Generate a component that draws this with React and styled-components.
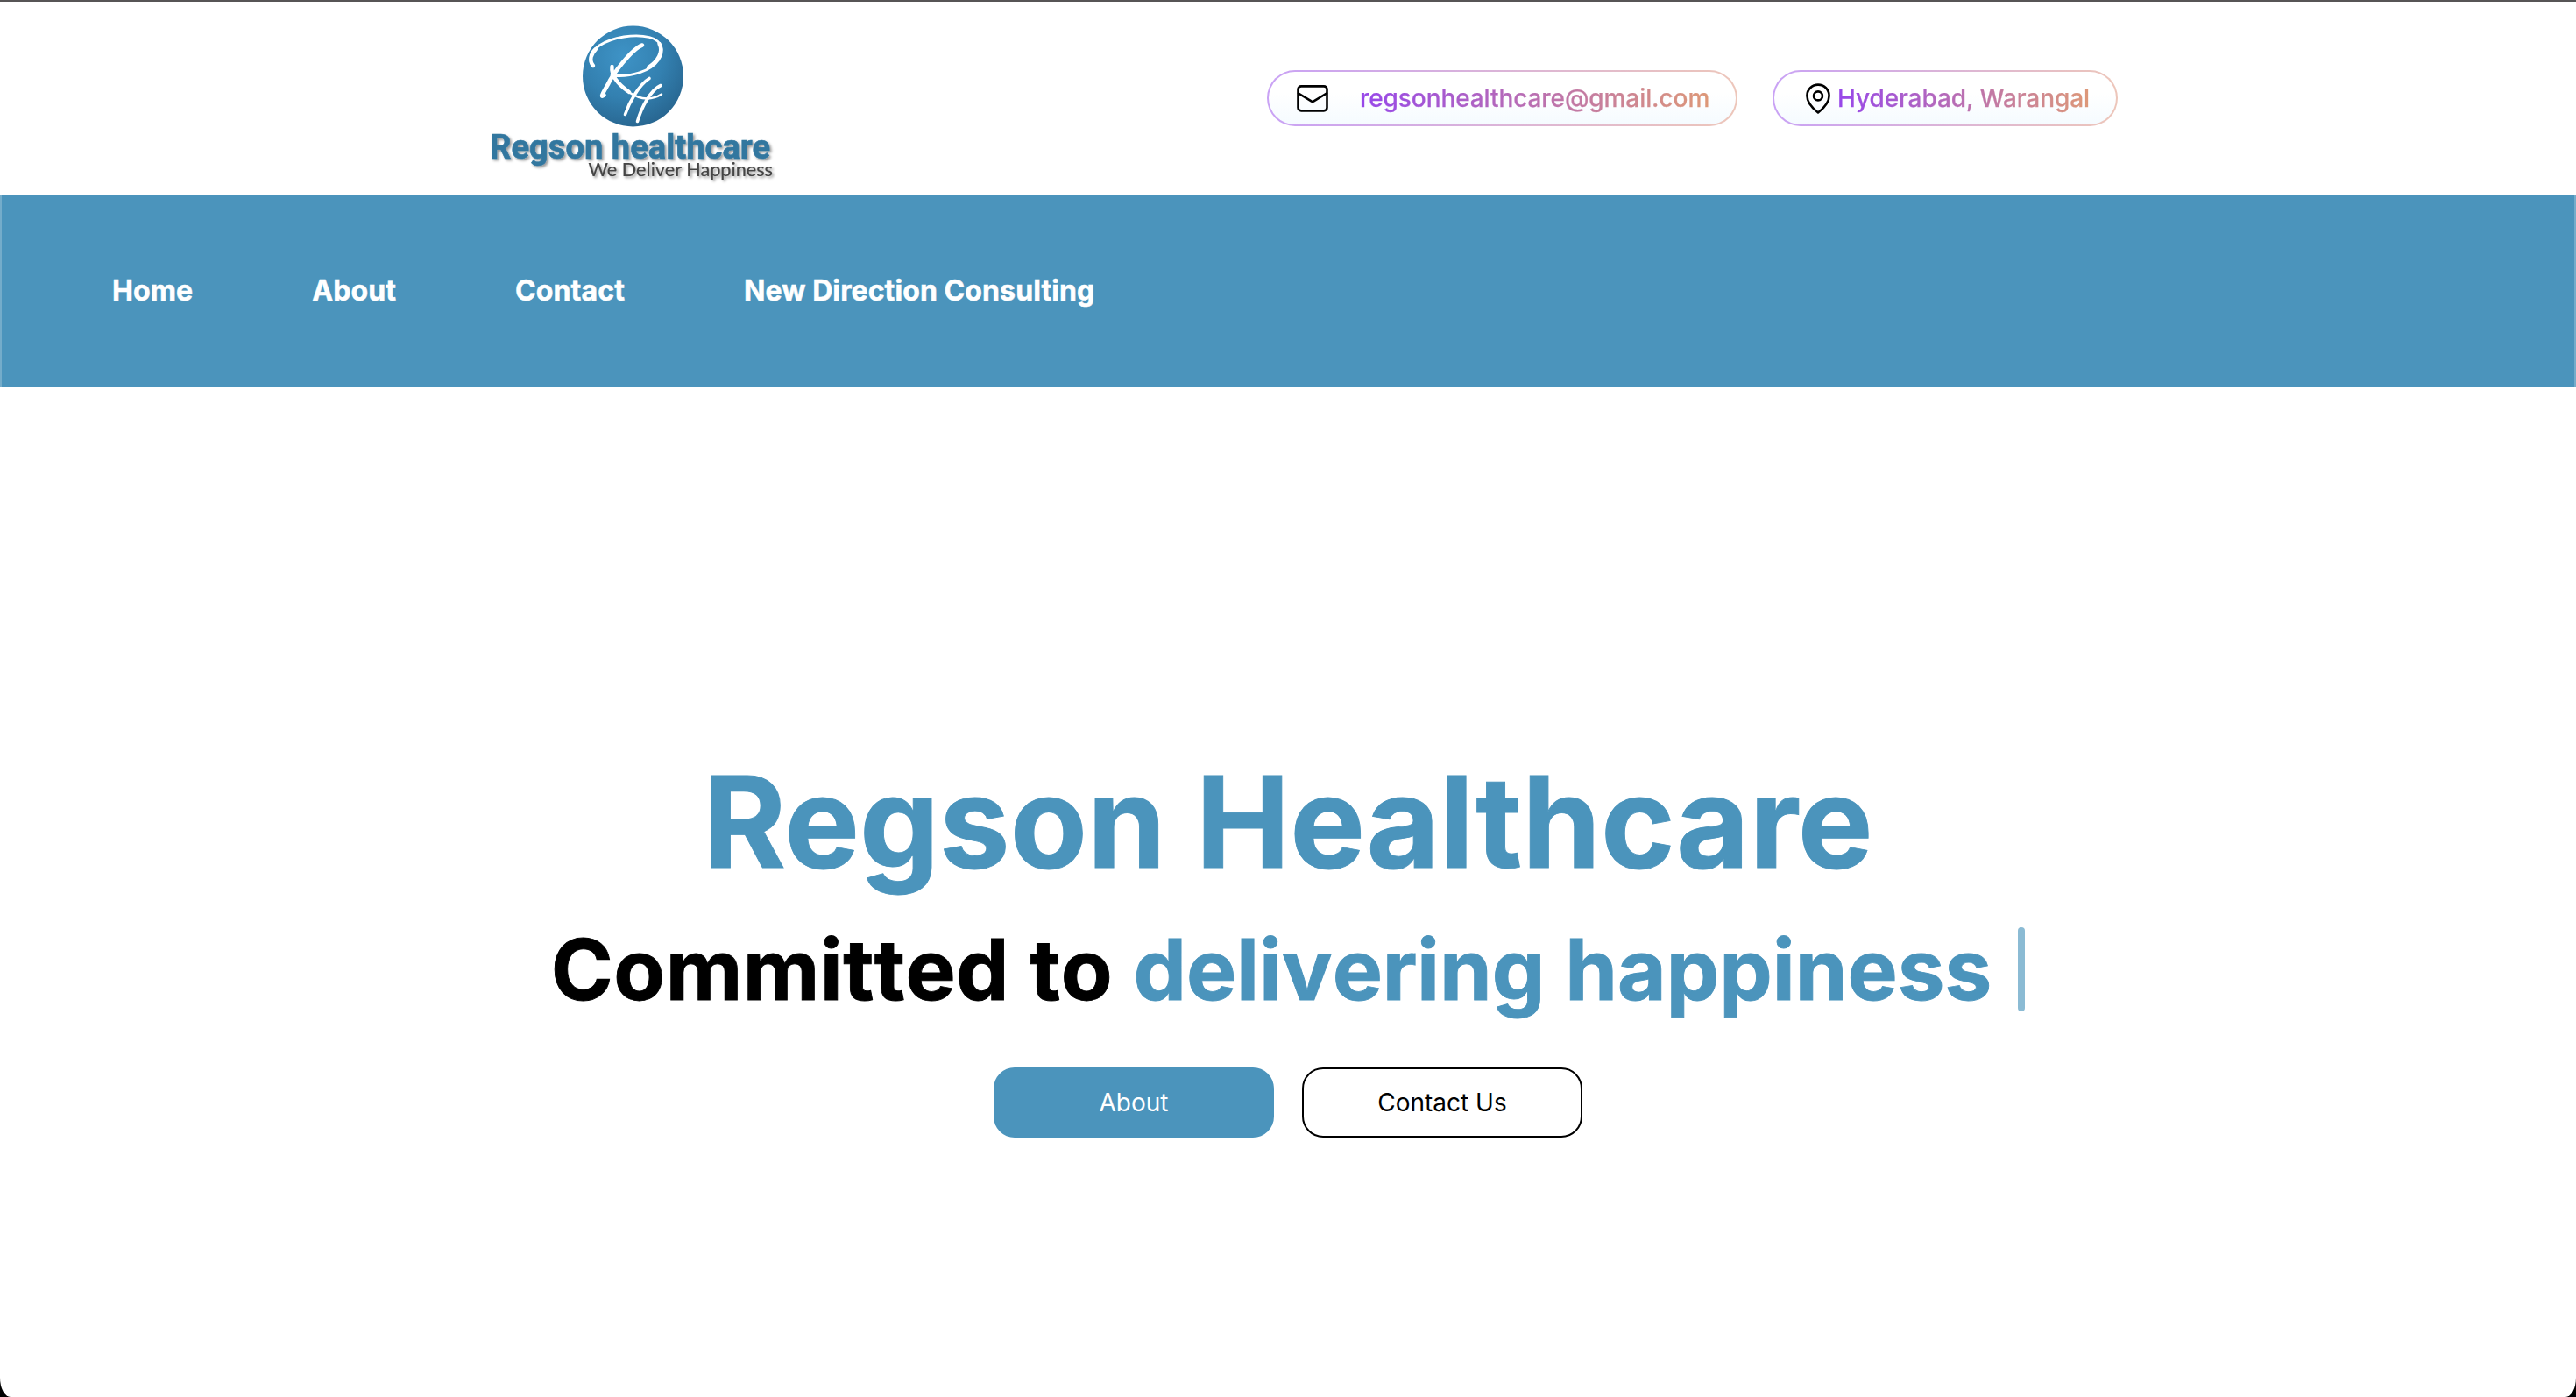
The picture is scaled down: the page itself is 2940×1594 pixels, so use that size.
import React from "react";
import styled, { createGlobalStyle, css } from "styled-components";

const brand = "#4b94bc";

const GlobalStyle = createGlobalStyle`
  *, *::before, *::after { box-sizing: border-box; }
  body { margin: 0; background: #000; font-family: Inter, "Liberation Sans", sans-serif; color: #000; }
  h1, h2 { margin: 0; }
`;

const Page = styled.div`
  display: flex;
  flex-direction: column;
  height: 1594px;
  overflow: hidden;
  background: #fff;
  border-top: 2px solid #575556;
  border-radius: 0 0 12px 12px / 0 0 22px 22px;
`;

const TopBar = styled.header`
  display: flex;
  align-items: center;
  height: 220px;
  padding-left: 540px;
`;

const LogoSlot = styled.div`
  width: 906px;
  height: 220px;
`;

const Pills = styled.div`
  display: flex;
  gap: 40px;
`;

const Pill = styled.div`
  display: flex;
  align-items: center;
  width: ${(p) => p.$width}px;
  height: 64px;
  padding-left: ${(p) => p.$inset}px;
  gap: ${(p) => p.$gap}px;
  border: 2px solid transparent;
  border-radius: 32px;
  background:
    linear-gradient(180deg, #fff 40%, #f5fbff 100%) padding-box,
    linear-gradient(90deg, #c9a2f5, #edc6ba) border-box;
`;

const PillText = styled.span`
  font-size: 28px;
  line-height: 40px;
  font-weight: 500;
  letter-spacing: -0.09px;
  white-space: nowrap;
  color: transparent;
  -webkit-text-stroke: 0.25px transparent;
  background: linear-gradient(90deg, #9747ea, #dd9878);
  background-clip: text;
  -webkit-background-clip: text;
`;

const Nav = styled.nav`
  display: flex;
  align-items: center;
  height: 220px;
  padding-left: 126px;
  gap: 136px;
  background: ${brand};
  border: solid #74acca;
  border-width: 0 2px;
`;

const NavLink = styled.a`
  color: #fff;
  font-size: 32px;
  line-height: 48px;
  font-weight: 700;
  letter-spacing: 0.1px;
  -webkit-text-stroke: 0.5px #fff;
  white-space: nowrap;
`;

const Hero = styled.main`
  display: flex;
  flex-direction: column;
  align-items: center;
  padding-top: 424px;
`;

const Title = styled.h1`
  font-size: 144px;
  line-height: 144px;
  font-weight: 700;
  color: ${brand};
  -webkit-text-stroke: 0.9px ${brand};
  white-space: nowrap;
`;

const Tagline = styled.h2`
  display: flex;
  align-items: center;
  margin-top: 48px;
  font-size: 96px;
  line-height: 96px;
  font-weight: 700;
  -webkit-text-stroke: 0.9px currentColor;
  white-space: pre;
`;

const Phrase = styled.span`
  color: ${(p) => (p.$accent ? brand : "#000")};
  letter-spacing: ${(p) => (p.$accent ? 0 : 0.45)}px;
`;

const Letter = styled.span`
  display: inline-block;
`;

const Cursor = styled.span`
  width: 8px;
  height: 96px;
  margin-left: 30px;
  border-radius: 4px;
  background: #8bbbd4;
`;

const Actions = styled.div`
  display: flex;
  gap: 32px;
  margin-top: 64px;
`;

const Button = styled.button`
  width: 320px;
  height: 80px;
  padding: 0;
  border-radius: 24px;
  font: 400 28px/40px Inter, sans-serif;
  ${(p) =>
    p.$outline
      ? css`background: #fff; color: #000; border: 2px solid #000;`
      : css`background: ${brand}; color: #fff; border: 0;`}
`;

const TypedPhrase = ({ text, accent }) => (
  <Phrase $accent={accent}>
    {[...text].map((char, i) => (
      <Letter key={i}>{char}</Letter>
    ))}
  </Phrase>
);

const Logo = () => (
  <svg width="360" height="220" viewBox="0 2 360 220" role="img" aria-label="Regson healthcare">
    <defs>
      <radialGradient id="disc" cx="0.4" cy="0.3" r="0.75">
        <stop offset="0" stopColor="#3e93c6" />
        <stop offset="0.55" stopColor="#3380b0" />
        <stop offset="1" stopColor="#27648e" />
      </radialGradient>
      <filter id="shade" x="-5%" y="-20%" width="112%" height="150%">
        <feDropShadow dx="2" dy="2" stdDeviation="1.4" floodColor="#000" floodOpacity="0.4" />
      </filter>
    </defs>
    <circle cx="182.5" cy="87" r="57.5" fill="url(#disc)" />
    <g fill="none" stroke="#fff" strokeLinecap="round" strokeLinejoin="round">
      <path d="M137 75.5C130.5 68 135 58 144 52C159 42 185 38.5 201 42.5C216 46.5 218.5 58 211.5 68.5C203 81 180 88.5 158 86" strokeWidth="2.8" />
      <path d="M137 75C132 69 134.5 61 140 56" strokeWidth="4.4" />
      <path d="M212.5 50C217.5 59 211 70 200 77" strokeWidth="4.4" />
      <path d="M193 51.5C181 56 159 85 154 96C147 108 145 112 149.5 108.5" strokeWidth="4.6" />
      <path d="M158.5 76C157 88 168 98 178 105" strokeWidth="4.4" />
      <path d="M176 104C190 114 203 115 215 107.5" strokeWidth="2.4" />
      <path d="M201 89.5C189 97 178 117 173.5 130.5" strokeWidth="3.6" />
      <path d="M214 97.5C202 103 192 123 187.5 138.5" strokeWidth="3.6" />
    </g>
    <text x="19" y="181" textLength="320" lengthAdjust="spacingAndGlyphs" fontFamily="Roboto, sans-serif" fontSize="39" fontWeight="700" fill="#33779f" stroke="#33779f" strokeWidth="0.7" filter="url(#shade)">Regson healthcare</text>
    <text x="131.5" y="201" textLength="210.5" lengthAdjust="spacingAndGlyphs" fontFamily="Lato, sans-serif" fontSize="20.5" fill="#444" stroke="#444" strokeWidth="0.2" filter="url(#shade)">We Deliver Happiness</text>
  </svg>
);

const MailIcon = () => (
  <svg width="36" height="32" viewBox="0 0 36 32" fill="none" stroke="#000" strokeWidth="2.6" strokeLinecap="round" strokeLinejoin="round">
    <rect x="1.5" y="2.4" width="33" height="28" rx="3.6" />
    <path d="M2 10.5L16.5 19.4Q18 20.2 19.5 19.4L34 10.5" />
  </svg>
);

const PinIcon = () => (
  <svg width="30" height="36" viewBox="0 0 30 36" fill="none" stroke="#000" strokeWidth="2.6" strokeLinejoin="round">
    <path d="M15 34.5C8 29 2.4 23 2.4 15.2A12.6 12.6 0 0 1 27.6 15.2C27.6 23 22 29 15 34.5Z" />
    <circle cx="15" cy="15.4" r="5" />
  </svg>
);

export default function App() {
  return (
    <>
      <GlobalStyle />
      <Page>
        <TopBar>
          <LogoSlot><Logo /></LogoSlot>
          <Pills>
            <Pill $width={537} $inset={32} $gap={36}>
              <MailIcon />
              <PillText>regsonhealthcare@gmail.com</PillText>
            </Pill>
            <Pill $width={394} $inset={35} $gap={7}>
              <PinIcon />
              <PillText>Hyderabad, Warangal</PillText>
            </Pill>
          </Pills>
        </TopBar>
        <Nav>
          <NavLink>Home</NavLink>
          <NavLink>About</NavLink>
          <NavLink>Contact</NavLink>
          <NavLink>New Direction Consulting</NavLink>
        </Nav>
        <Hero>
          <Title>Regson Healthcare</Title>
          <Tagline>
            <TypedPhrase text="Committed to " />
            <TypedPhrase text="delivering happiness" accent />
            <Cursor />
          </Tagline>
          <Actions>
            <Button>About</Button>
            <Button $outline>Contact Us</Button>
          </Actions>
        </Hero>
      </Page>
    </>
  );
}
